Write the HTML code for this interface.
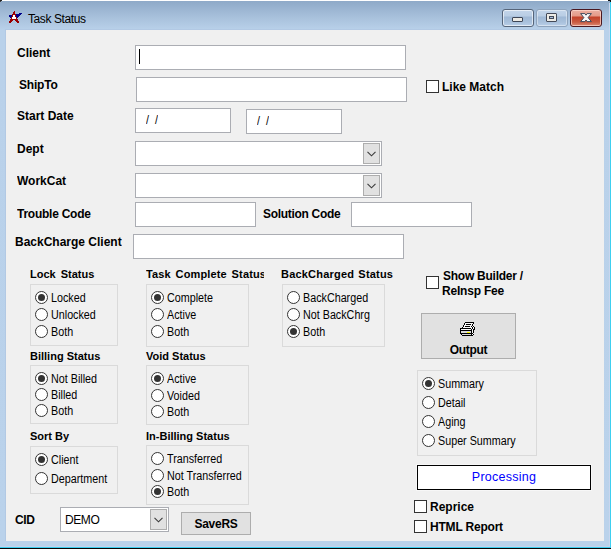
<!DOCTYPE html>
<html><head><meta charset="utf-8">
<style>
*{margin:0;padding:0;box-sizing:border-box}
html,body{width:611px;height:549px;overflow:hidden;background:#fff}
body{position:relative;font-family:"Liberation Sans",sans-serif;color:#000}
.win{position:absolute;left:0;top:1px;width:610px;height:546px;background:linear-gradient(#8ea9c8,#a6bfda 15px,#b9d1ea 29px,#bad2eb);}
.bot{position:absolute;left:0;top:547px;width:611px;height:2px;background:#1d2d36}
.client{position:absolute;left:6px;top:30px;width:598px;height:511px;background:#f0f0f0}
.tbtn{position:absolute;top:9px;width:32px;height:18px;border:1px solid #56657a;border-radius:3px;background:linear-gradient(#c3d5ea,#b9cde4 6px,#9fb8d5 7px,#a9c1dc 12px,#b9cfe8);box-shadow:inset 0 0 0 1px rgba(255,255,255,.6)}
.tbtn.dis{border-color:#8ea3bc;box-shadow:inset 0 0 0 1px rgba(255,255,255,.4)}
.tbtn.cls{border-color:#4a1820;background:linear-gradient(#eab0a2,#e59a88 6px,#c3422a 7px,#c95a40 12px,#dc8a74);box-shadow:inset 0 0 0 1px rgba(255,220,210,.7)}
.gmin{position:absolute;left:9px;top:7px;width:11px;height:5px;border:1px solid #3e4656;border-radius:1px;background:#eceae4}
.gmax{position:absolute;left:9px;top:3px;width:11px;height:9px;border:1px solid #444a58;border-radius:1px;background:#ecebe6}
.gmax::after{content:"";box-sizing:border-box;position:absolute;left:2px;top:2px;width:5px;height:3px;border:1px solid #444a58;background:#a7c0dc}

.a{position:absolute;white-space:nowrap}
.lbl{position:absolute;font-weight:bold;font-size:12px;line-height:14px;white-space:nowrap;transform:scaleY(1.13);transform-origin:0 0}
.tb{position:absolute;background:#fff;border:1px solid #abadb3;height:25px}
.cb{position:absolute;background:#fff;border:1px solid #abadb3;height:25px}
.cb .btn{position:absolute;right:1px;top:1px;width:17px;height:21px;background:#e1e1e1;border:1px solid #adadad}
.grp{position:absolute;border:1px solid #dadada}
.rad{position:absolute;width:13px;height:13px;border-radius:50%;border:1px solid #333;background:#fff}
.rad.on::after{content:"";position:absolute;left:2px;top:2px;width:7px;height:7px;border-radius:50%;background:#333}
.rt{position:absolute;font-size:10.75px;line-height:13px;white-space:nowrap;transform:scaleY(1.12);transform-origin:0 0}
.chk{position:absolute;width:13px;height:13px;border:1px solid #333;background:#fff}
.button{position:absolute;background:#e1e1e1;border:1px solid #adadad}
</style></head><body>
<div class="win"></div>
<div class="a" style="left:609px;top:3px;width:1px;height:544px;background:#c9d6ee"></div>
<div class="a" style="left:610px;top:2px;width:1px;height:546px;background:#3ccff0"></div>
<div class="a" style="left:0;top:547px;width:611px;height:1px;background:#3ccff0"></div>
<div class="a" style="left:0;top:548px;width:611px;height:1px;background:#050505"></div>
<div class="a" style="left:0;top:0;width:2px;height:1px;background:#222"></div>
<div class="a" style="left:0;top:1px;width:1px;height:1px;background:#444"></div>
<div class="a" style="left:608px;top:0;width:3px;height:1px;background:#111"></div>
<div class="a" style="left:610px;top:1px;width:1px;height:1px;background:#111"></div>
<div class="a" style="left:5px;top:29px;width:599px;height:512px;background:#b2c9e4"></div>
<div class="a" style="left:0;top:546px;width:610px;height:1px;background:#c6d3ec"></div>
<div class="client"></div>
<svg class="a" style="left:8px;top:10px" width="14" height="14" viewBox="0 0 14 14" shape-rendering="crispEdges">
<path fill="#00008b" d="M11 3h3v1h-3zM8 4h5v1h-5zM1 5h3v1h-3zM8 5h4v1h-4zM1 6h3v1h-3zM8 6h3v1h-3zM2 7h1v1h-1zM9 7h1v1h-1z"/>
<path fill="#9a0000" d="M6 1h1v1h-1zM5 2h2v1h-2zM5 3h2v1h-2zM4 4h4v1h-4zM4 5h1v1h-1zM7 5h1v1h-1zM4 6h1v1h-1zM7 6h1v1h-1zM3 7h1v1h-1zM8 7h1v1h-1zM3 8h1v1h-1zM8 8h1v1h-1zM2 9h8v1h-8zM2 10h3v1h-3zM7 10h3v1h-3zM1 11h3v1h-3zM8 11h3v1h-3zM1 12h2v1h-2zM9 12h2v1h-2z"/>
<path fill="#fff" d="M5 5h2v1h-2zM5 6h2v1h-2zM4 7h4v1h-4zM4 8h4v1h-4z"/>
</svg>
<div class="a" style="left:28px;top:12px;font-size:12px;line-height:14px;color:#000;letter-spacing:-0.4px">Task Status</div>
<div class="tbtn" style="left:502px"><div class="gmin"></div></div>
<div class="tbtn dis" style="left:536px"><div class="gmax"></div></div>
<div class="tbtn cls" style="left:570px"><svg style="position:absolute;left:9px;top:3px" width="12" height="10" viewBox="0 0 12 10"><path d="M0.6 0.6H4.9L6 2.2L7.1 0.6H11.4L8.1 4.6L11.4 8.6H7.1L6 7L4.9 8.6H0.6L3.9 4.6Z" fill="#f8f8f8" stroke="#414b5c" stroke-width="1" stroke-linejoin="round"/></svg></div>

<!-- labels -->
<div class="lbl" style="left:17px;top:45px">Client</div>
<div class="lbl" style="left:19px;top:77px;letter-spacing:-0.2px">ShipTo</div>
<div class="lbl" style="left:17px;top:108px">Start Date</div>
<div class="lbl" style="left:17px;top:141px">Dept</div>
<div class="lbl" style="left:17px;top:173px">WorkCat</div>
<div class="lbl" style="left:17px;top:206px;letter-spacing:-0.25px">Trouble Code</div>
<div class="lbl" style="left:263px;top:206px;letter-spacing:-0.3px">Solution Code</div>
<div class="lbl" style="left:15px;top:234px">BackCharge Client</div>

<div class="tb" style="left:135px;top:45px;width:271px"></div>
<div class="a" style="left:139px;top:49px;width:1px;height:15px;background:#000"></div>
<div class="tb" style="left:136px;top:77px;width:271px"></div>
<div class="chk" style="left:426px;top:80px"></div>
<div class="lbl" style="left:442px;top:79px">Like Match</div>
<div class="tb" style="left:135px;top:108px;width:96px"></div>
<div class="rt" style="left:146px;top:113px;word-spacing:3px">/ /</div>
<div class="tb" style="left:246px;top:109px;width:96px"></div>
<div class="rt" style="left:257px;top:114px;word-spacing:3px">/ /</div>
<div class="cb" style="left:135px;top:141px;width:247px"><div class="btn"><svg style="position:absolute;left:3px;top:7px" width="9" height="6" viewBox="0 0 9 6"><path d="M0.5 0.8L4.5 4.8L8.5 0.8" fill="none" stroke="#3a3a3a" stroke-width="1.1"/></svg></div></div>
<div class="cb" style="left:135px;top:173px;width:247px"><div class="btn"><svg style="position:absolute;left:3px;top:7px" width="9" height="6" viewBox="0 0 9 6"><path d="M0.5 0.8L4.5 4.8L8.5 0.8" fill="none" stroke="#3a3a3a" stroke-width="1.1"/></svg></div></div>
<div class="tb" style="left:135px;top:202px;width:121px"></div>
<div class="tb" style="left:351px;top:202px;width:121px"></div>
<div class="tb" style="left:133px;top:234px;width:271px"></div>

<!-- groups -->
<div class="lbl" style="left:30px;top:267px;font-size:11px;transform:none;word-spacing:2px">Lock Status</div>
<div class="grp" style="left:30px;top:284px;width:88px;height:62px"></div>
<div class="rad on" style="left:35px;top:291px"></div><div class="rt" style="left:51px;top:291px">Locked</div>
<div class="rad" style="left:35px;top:308px"></div><div class="rt" style="left:51px;top:308px">Unlocked</div>
<div class="rad" style="left:35px;top:325px"></div><div class="rt" style="left:51px;top:325px">Both</div>

<div class="lbl" style="left:146px;top:267px;width:118px;overflow:hidden;letter-spacing:0.15px;word-spacing:1.5px;font-size:11px;transform:none">Task Complete Status</div>
<div class="grp" style="left:146px;top:284px;width:103px;height:63px"></div>
<div class="rad on" style="left:151px;top:291px"></div><div class="rt" style="left:167px;top:291px">Complete</div>
<div class="rad" style="left:151px;top:308px"></div><div class="rt" style="left:167px;top:308px">Active</div>
<div class="rad" style="left:151px;top:325px"></div><div class="rt" style="left:167px;top:325px">Both</div>

<div class="lbl" style="left:281px;top:267px;font-size:11px;transform:none;letter-spacing:0.2px;word-spacing:1px">BackCharged Status</div>
<div class="grp" style="left:282px;top:284px;width:103px;height:63px"></div>
<div class="rad" style="left:287px;top:291px"></div><div class="rt" style="left:303px;top:291px">BackCharged</div>
<div class="rad" style="left:287px;top:308px"></div><div class="rt" style="left:303px;top:308px">Not BackChrg</div>
<div class="rad on" style="left:287px;top:325px"></div><div class="rt" style="left:303px;top:325px">Both</div>

<div class="chk" style="left:426px;top:276px"></div>
<div class="lbl" style="left:443px;top:268px;letter-spacing:-0.25px">Show Builder /</div>
<div class="lbl" style="left:442px;top:283px;letter-spacing:-0.2px">ReInsp Fee</div>

<div class="button" style="left:421px;top:313px;width:95px;height:46px"></div>
<svg class="a" style="left:460px;top:322px" width="16" height="14" viewBox="0 0 16 14" shape-rendering="crispEdges"><path fill="#f8f8f8" d="M5 1h1v1h-1zM6 1h1v1h-1zM7 1h1v1h-1zM8 1h1v1h-1zM9 1h1v1h-1zM10 1h1v1h-1zM11 1h1v1h-1zM12 1h1v1h-1zM5 2h1v1h-1zM11 2h1v1h-1zM4 3h1v1h-1zM5 3h1v1h-1zM6 3h1v1h-1zM7 3h1v1h-1zM8 3h1v1h-1zM9 3h1v1h-1zM10 3h1v1h-1zM11 3h1v1h-1zM13 3h1v1h-1zM4 4h1v1h-1zM10 4h1v1h-1zM12 4h1v1h-1zM3 5h1v1h-1zM4 5h1v1h-1zM5 5h1v1h-1zM6 5h1v1h-1zM7 5h1v1h-1zM8 5h1v1h-1zM9 5h1v1h-1zM10 5h1v1h-1zM11 5h1v1h-1zM13 5h1v1h-1zM11 6h1v1h-1zM13 6h1v1h-1zM1 7h1v1h-1zM2 7h1v1h-1zM3 7h1v1h-1zM4 7h1v1h-1zM5 7h1v1h-1zM6 7h1v1h-1zM7 7h1v1h-1zM8 7h1v1h-1zM9 7h1v1h-1zM10 7h1v1h-1zM12 7h1v1h-1zM12 8h1v1h-1zM12 9h1v1h-1zM12 10h1v1h-1zM13 11h1v1h-1zM12 12h1v1h-1z"/><path fill="#dcdcdc" d="M1 9h1v1h-1zM2 9h1v1h-1zM3 9h1v1h-1zM4 9h1v1h-1zM5 9h1v1h-1zM6 9h1v1h-1zM7 9h1v1h-1zM8 9h1v1h-1zM9 9h1v1h-1zM10 9h1v1h-1zM1 10h1v1h-1zM2 10h1v1h-1zM3 10h1v1h-1zM4 10h1v1h-1zM5 10h1v1h-1zM6 10h1v1h-1zM10 10h1v1h-1zM2 12h1v1h-1zM3 12h1v1h-1zM4 12h1v1h-1zM5 12h1v1h-1zM6 12h1v1h-1zM7 12h1v1h-1zM8 12h1v1h-1zM9 12h1v1h-1zM10 12h1v1h-1z"/><path fill="#ffff00" d="M7 10h1v1h-1zM8 10h1v1h-1zM9 10h1v1h-1z"/><path fill="#000" d="M5 0h1v1h-1zM6 0h1v1h-1zM7 0h1v1h-1zM8 0h1v1h-1zM9 0h1v1h-1zM10 0h1v1h-1zM11 0h1v1h-1zM12 0h1v1h-1zM13 0h1v1h-1zM4 1h1v1h-1zM13 1h1v1h-1zM4 2h1v1h-1zM6 2h1v1h-1zM7 2h1v1h-1zM8 2h1v1h-1zM9 2h1v1h-1zM10 2h1v1h-1zM12 2h1v1h-1zM3 3h1v1h-1zM12 3h1v1h-1zM3 4h1v1h-1zM5 4h1v1h-1zM6 4h1v1h-1zM7 4h1v1h-1zM8 4h1v1h-1zM9 4h1v1h-1zM11 4h1v1h-1zM13 4h1v1h-1zM2 5h1v1h-1zM12 5h1v1h-1zM14 5h1v1h-1zM0 6h1v1h-1zM1 6h1v1h-1zM2 6h1v1h-1zM3 6h1v1h-1zM4 6h1v1h-1zM5 6h1v1h-1zM6 6h1v1h-1zM7 6h1v1h-1zM8 6h1v1h-1zM9 6h1v1h-1zM10 6h1v1h-1zM12 6h1v1h-1zM14 6h1v1h-1zM0 7h1v1h-1zM11 7h1v1h-1zM13 7h1v1h-1zM14 7h1v1h-1zM0 8h1v1h-1zM1 8h1v1h-1zM2 8h1v1h-1zM3 8h1v1h-1zM4 8h1v1h-1zM5 8h1v1h-1zM6 8h1v1h-1zM7 8h1v1h-1zM8 8h1v1h-1zM9 8h1v1h-1zM10 8h1v1h-1zM11 8h1v1h-1zM13 8h1v1h-1zM0 9h1v1h-1zM11 9h1v1h-1zM13 9h1v1h-1zM0 10h1v1h-1zM11 10h1v1h-1zM13 10h1v1h-1zM0 11h1v1h-1zM1 11h1v1h-1zM2 11h1v1h-1zM3 11h1v1h-1zM4 11h1v1h-1zM5 11h1v1h-1zM6 11h1v1h-1zM7 11h1v1h-1zM8 11h1v1h-1zM9 11h1v1h-1zM10 11h1v1h-1zM11 11h1v1h-1zM12 11h1v1h-1zM1 12h1v1h-1zM11 12h1v1h-1zM13 12h1v1h-1zM2 13h1v1h-1zM3 13h1v1h-1zM4 13h1v1h-1zM5 13h1v1h-1zM6 13h1v1h-1zM7 13h1v1h-1zM8 13h1v1h-1zM9 13h1v1h-1zM10 13h1v1h-1zM11 13h1v1h-1zM12 13h1v1h-1z"/></svg>
<div class="lbl" style="left:421px;top:342px;width:95px;text-align:center;letter-spacing:-0.3px">Output</div>

<div class="lbl" style="left:30px;top:349px;font-size:11px;transform:none">Billing Status</div>
<div class="grp" style="left:30px;top:365px;width:88px;height:59px"></div>
<div class="rad on" style="left:35px;top:372px"></div><div class="rt" style="left:51px;top:372px">Not Billed</div>
<div class="rad" style="left:35px;top:388px"></div><div class="rt" style="left:51px;top:388px">Billed</div>
<div class="rad" style="left:35px;top:404px"></div><div class="rt" style="left:51px;top:404px">Both</div>

<div class="lbl" style="left:146px;top:349px;font-size:11px;transform:none">Void Status</div>
<div class="grp" style="left:146px;top:365px;width:103px;height:60px"></div>
<div class="rad on" style="left:151px;top:372px"></div><div class="rt" style="left:167px;top:372px">Active</div>
<div class="rad" style="left:151px;top:389px"></div><div class="rt" style="left:167px;top:389px">Voided</div>
<div class="rad" style="left:151px;top:405px"></div><div class="rt" style="left:167px;top:405px">Both</div>

<div class="grp" style="left:417px;top:370px;width:120px;height:86px"></div>
<div class="rad on" style="left:422px;top:377px"></div><div class="rt" style="left:438px;top:377px">Summary</div>
<div class="rad" style="left:422px;top:396px"></div><div class="rt" style="left:438px;top:396px">Detail</div>
<div class="rad" style="left:422px;top:415px"></div><div class="rt" style="left:438px;top:415px">Aging</div>
<div class="rad" style="left:422px;top:434px"></div><div class="rt" style="left:438px;top:434px">Super Summary</div>

<div class="lbl" style="left:30px;top:429px;font-size:11px;transform:none">Sort By</div>
<div class="grp" style="left:30px;top:446px;width:88px;height:48px"></div>
<div class="rad on" style="left:35px;top:453px"></div><div class="rt" style="left:51px;top:453px">Client</div>
<div class="rad" style="left:35px;top:472px"></div><div class="rt" style="left:51px;top:472px">Department</div>

<div class="lbl" style="left:146px;top:429px;font-size:11px;transform:none">In-Billing Status</div>
<div class="grp" style="left:146px;top:445px;width:103px;height:60px"></div>
<div class="rad" style="left:151px;top:452px"></div><div class="rt" style="left:167px;top:452px">Transferred</div>
<div class="rad" style="left:151px;top:469px"></div><div class="rt" style="left:167px;top:469px">Not Transferred</div>
<div class="rad on" style="left:151px;top:485px"></div><div class="rt" style="left:167px;top:485px">Both</div>

<div class="a" style="left:417px;top:465px;width:174px;height:25px;border:1px solid #000;background:#fff;box-shadow:0 0 0 1px #f7f7f7"></div>
<div class="a" style="left:417px;top:470px;width:174px;text-align:center;font-size:12.5px;line-height:14px;letter-spacing:0.25px;color:#0000ff">Processing</div>

<div class="chk" style="left:414px;top:500px"></div>
<div class="lbl" style="left:430px;top:499px">Reprice</div>
<div class="chk" style="left:414px;top:520px"></div>
<div class="lbl" style="left:430px;top:519px;letter-spacing:-0.2px">HTML Report</div>

<div class="lbl" style="left:15px;top:512px;letter-spacing:-0.4px">CID</div>
<div class="cb" style="left:60px;top:507px;width:109px;height:25px"><div class="btn" style="height:21px"><svg style="position:absolute;left:3px;top:7px" width="9" height="6" viewBox="0 0 9 6"><path d="M0.5 0.8L4.5 4.8L8.5 0.8" fill="none" stroke="#3a3a3a" stroke-width="1.1"/></svg></div></div>
<div class="a" style="left:65px;top:513px;font-size:12px;line-height:14px;letter-spacing:-0.4px">DEMO</div>
<div class="button" style="left:181px;top:512px;width:70px;height:23px"></div>
<div class="lbl" style="left:181px;top:516px;width:70px;text-align:center;letter-spacing:-0.25px">SaveRS</div>
</body></html>
